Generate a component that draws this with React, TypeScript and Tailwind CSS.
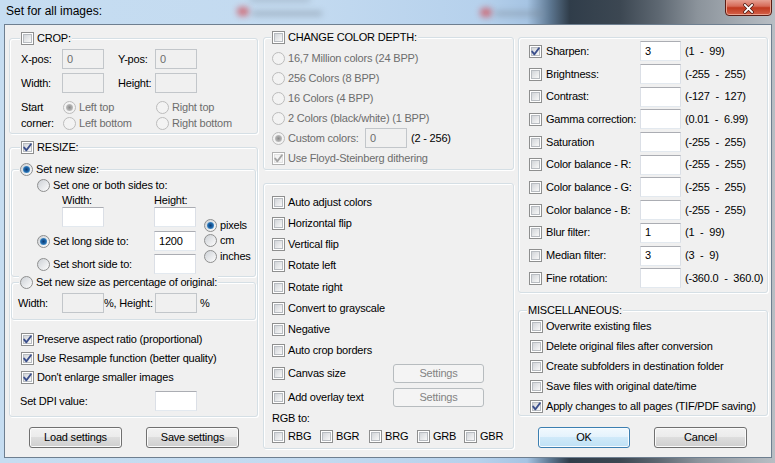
import React from 'react';

type Opt = { checked?: boolean; disabled?: boolean };

const Check = ({ checked = false, disabled = false }: Opt) => (
  <span className={`relative flex h-[13px] w-[13px] shrink-0 items-center justify-center border bg-white ${disabled ? 'border-[#b1b1b1]' : 'border-[#8e8f8f]'}`}>
    <span className={`h-[9px] w-[9px] border ${disabled ? 'border-[#e3e3e3] bg-[#f4f4f4]' : 'border-[#b8bcc1] bg-[linear-gradient(135deg,#d2d5d9,#f8f8f8)]'}`} />
    {checked && (
      <svg viewBox="0 0 11 11" className="absolute left-0 top-0 h-[11px] w-[11px]">
        <path d="M2.2 5.6 L4.4 8.3 L8.9 2.2" fill="none" stroke={disabled ? '#a3a3a3' : '#3b4f8c'} strokeWidth="1.9" strokeLinecap="round" strokeLinejoin="round" />
      </svg>
    )}
  </span>
);

const Radio = ({ checked = false, disabled = false }: Opt) => (
  <span className={`flex h-[13px] w-[13px] shrink-0 items-center justify-center rounded-full border ${disabled ? 'border-[#bcbcbc] bg-[#f3f3f3]' : 'border-[#8e8f8f] bg-[linear-gradient(135deg,#cdd1d6,#fdfdfd)]'}`}>
    {checked && (
      <span className={`h-[7px] w-[7px] rounded-full ${disabled ? 'bg-[radial-gradient(circle,#8a8a8a_0%,#b2b2b2_55%,#dcdcdc_100%)]' : 'bg-[radial-gradient(circle,#0d3a70_0%,#1d64a8_45%,#74bfea_100%)]'}`} />
    )}
  </span>
);

const Field = ({ value = '', disabled = false, w = 'w-[42px]' }: { value?: string; disabled?: boolean; w?: string }) => (
  <span className={`flex h-[20px] ${w} shrink-0 items-center border pl-[4px] ${disabled ? 'border-[#c2c6ca] bg-[#f0f0f0] text-[#6d6d6d]' : 'border-t-[#abadb3] border-x-[#dbdfe6] border-b-[#e3e9ef] bg-white'}`}>
    {value}
  </span>
);

const Btn = ({ children, w = 'w-[93px]', h = 'h-[21px]', kind = 'normal' }: { children: React.ReactNode; w?: string; h?: string; kind?: string }) => {
  const look =
    kind === 'default'
      ? 'border-[#3c7fb1] bg-[linear-gradient(180deg,#f1f9fe_0%,#e3f2fc_49%,#cfe9f9_50%,#bfe1f5_100%)] shadow-[inset_0_0_0_1px_#f8fcff]'
      : kind === 'disabled'
        ? 'border-[#b7bcbf] bg-[#f4f4f4] text-[#838383]'
        : 'border-[#707070] bg-[linear-gradient(180deg,#f2f2f2_0%,#ebebeb_49%,#dddddd_50%,#cfcfcf_100%)] shadow-[inset_0_0_0_1px_#fbfbfb]';
  return <span className={`flex ${w} ${h} shrink-0 items-center justify-center rounded-[3px] border ${look}`}>{children}</span>;
};

const Group = ({ className = '', legend, legendLeft = 'left-[8px]', children }: { className?: string; legend?: React.ReactNode; legendLeft?: string; children?: React.ReactNode }) => (
  <div className={`relative rounded-[3px] border border-[#d5dfe5] shadow-[inset_1px_1px_0_#ffffff,1px_1px_0_#ffffff] ${className}`}>
    {legend && <div className={`absolute -top-[7px] flex h-[13px] items-center gap-[3px] bg-[#f0f0f0] px-[1px] ${legendLeft}`}>{legend}</div>}
    {children}
  </div>
);

const grey = 'text-[#6d6d6d]';

const filters: [string, boolean, string, string][] = [
  ['Sharpen:', true, '3', '(1  -  99)'],
  ['Brightness:', false, '', '(-255  -  255)'],
  ['Contrast:', false, '', '(-127  -  127)'],
  ['Gamma correction:', false, '', '(0.01  -  6.99)'],
  ['Saturation', false, '', '(-255  -  255)'],
  ['Color balance - R:', false, '', '(-255  -  255)'],
  ['Color balance - G:', false, '', '(-255  -  255)'],
  ['Color balance - B:', false, '', '(-255  -  255)'],
  ['Blur filter:', false, '1', '(1  -  99)'],
  ['Median filter:', false, '3', '(3  -  9)'],
  ['Fine rotation:', false, '', '(-360.0  -  360.0)'],
];

const misc: [string, boolean][] = [
  ['Overwrite existing files', false],
  ['Delete original files after conversion', false],
  ['Create subfolders in destination folder', false],
  ['Save files with original date/time', false],
  ['Apply changes to all pages (TIF/PDF saving)', true],
];

const actions: [string, string][] = [
  ['Auto adjust colors', 'h-[21px]'],
  ['Horizontal flip', 'h-[21px]'],
  ['Vertical flip', 'h-[20px]'],
  ['Rotate left', 'h-[22px]'],
  ['Rotate right', 'h-[22px]'],
  ['Convert to grayscale', 'h-[21px]'],
  ['Negative', 'h-[21px]'],
  ['Auto crop borders', 'h-[21px]'],
];

export default function App() {
  return (
    <div className="relative h-[463px] w-[775px] overflow-hidden bg-[linear-gradient(90deg,#c6ddf1_0%,#c3daf0_40%,#b6d1ec_62%,#a6c4e3_68%,#5d7791_71%,#303d4a_73.5%,#3c4752_80%,#5e6872_85%,#8b939b_90%,#a5acb3_95.5%,#b8bec4_100%)] font-['Liberation_Sans',Arial,sans-serif] text-[11px] leading-none tracking-[-0.2px] text-black">
      {/* blurred desktop behind the glass */}
      <span className="absolute left-[237px] top-[7px] h-[9px] w-[12px] rounded-full bg-[#d2545d] opacity-80 blur-[3px]" />
      <span className="absolute left-[252px] top-[11px] h-[5px] w-[70px] bg-[#7d8b99] opacity-50 blur-[3px]" />
      <span className="absolute left-[250px] top-[-3px] h-[5px] w-[60px] bg-[#7d8b99] opacity-40 blur-[3px]" />
      <span className="absolute left-[480px] top-[8px] h-[9px] w-[12px] rounded-full bg-[#d2545d] opacity-80 blur-[3px]" />
      <span className="absolute left-[495px] top-[11px] h-[5px] w-[48px] bg-[#7d8b99] opacity-50 blur-[3px]" />

      {/* title bar */}
      <div className="relative flex h-[24px] items-start justify-between">
        <span className="pl-[6px] pt-[4px] text-[12px] leading-[14px] tracking-normal">Set for all images:</span>
        <span className="mr-[3px] -mt-[2px] flex h-[18px] w-[47px] items-center justify-center rounded-b-[4px] border border-[#5a1d15] bg-[linear-gradient(180deg,#e9a99c_0%,#d66b58_45%,#c0391f_55%,#d4624a_100%)] shadow-[inset_0_0_0_1px_#eba28f]">
          <svg viewBox="0 0 14 12" className="mt-[2px] h-[11px] w-[13px]">
            <path d="M3 2 L11 10 M11 2 L3 10" stroke="#4a1a12" strokeWidth="3.6" strokeLinecap="round" />
            <path d="M3 2 L11 10 M11 2 L3 10" stroke="#ffffff" strokeWidth="2" strokeLinecap="round" />
          </svg>
        </span>
      </div>

      {/* client area */}
      <div className="ml-[4px] flex h-[434px] w-[768px] border border-[#6e7f90] bg-[#f0f0f0] pl-[4px]">
        {/* left column */}
        <div className="flex w-[249px] shrink-0 flex-col pt-[13px]">
          <Group
            className="h-[96px]"
            legendLeft="left-[10px]"
            legend={
              <>
                <Check />
                <span>CROP:</span>
              </>
            }
          >
            <div className="flex flex-col pl-[11px] pt-[10px]">
              <div className="flex h-[20px] items-center">
                <span className="w-[41px]">X-pos:</span>
                <Field value="0" disabled />
                <span className="ml-[14px] w-[37px]">Y-pos:</span>
                <Field value="0" disabled />
              </div>
              <div className="mt-[4px] flex h-[20px] items-center">
                <span className="w-[41px]">Width:</span>
                <Field disabled />
                <span className="ml-[14px] w-[37px]">Height:</span>
                <Field disabled />
              </div>
              <div className="mt-[6px] flex">
                <div className="flex w-[42px] flex-col">
                  <span className="flex h-[16px] items-center">Start</span>
                  <span className="flex h-[16px] items-center">corner:</span>
                </div>
                <div className={`flex w-[93px] flex-col ${grey}`}>
                  <span className="flex h-[16px] items-center gap-[3px]"><Radio checked disabled />Left top</span>
                  <span className="flex h-[16px] items-center gap-[3px]"><Radio disabled />Left bottom</span>
                </div>
                <div className={`flex flex-col ${grey}`}>
                  <span className="flex h-[16px] items-center gap-[3px]"><Radio disabled />Right top</span>
                  <span className="flex h-[16px] items-center gap-[3px]"><Radio disabled />Right bottom</span>
                </div>
              </div>
            </div>
          </Group>

          <Group
            className="mt-[13px] h-[270px]"
            legendLeft="left-[10px]"
            legend={
              <>
                <Check checked />
                <span>RESIZE:</span>
              </>
            }
          >
            <div className="flex flex-col">
              <Group
                className="mx-[1px] mt-[21px] h-[108px]"
                legendLeft="left-[7px]"
                legend={
                  <>
                    <Radio checked />
                    <span>Set new size:</span>
                  </>
                }
              >
                <div className="flex flex-col pl-[25px]">
                  <div className="mt-[7px] flex h-[16px] items-center gap-[3px]">
                    <Radio />
                    <span>Set one or both sides to:</span>
                  </div>
                  <div className="flex h-[14px] items-center pl-[25px]">
                    <span className="w-[92px]">Width:</span>
                    <span>Height:</span>
                  </div>
                  <div className="flex">
                    <div className="flex w-[117px] flex-col">
                      <div className="h-[20px] pl-[25px]">
                        <Field w="w-[42px]" />
                      </div>
                      <div className="mt-[4px] flex h-[20px] items-center gap-[3px]">
                        <Radio checked />
                        <span>Set long side to:</span>
                      </div>
                      <div className="mt-[3px] flex h-[20px] items-center gap-[3px]">
                        <Radio />
                        <span>Set short side to:</span>
                      </div>
                    </div>
                    <div className="flex w-[42px] flex-col">
                      <Field />
                      <div className="mt-[4px]"><Field value="1200" /></div>
                      <div className="mt-[3px]"><Field /></div>
                    </div>
                    <div className="ml-[8px] mt-[10px] flex flex-col">
                      <span className="flex h-[16px] items-center gap-[3px]"><Radio checked />pixels</span>
                      <span className="flex h-[15px] items-center gap-[3px]"><Radio />cm</span>
                      <span className="flex h-[16px] items-center gap-[3px]"><Radio />inches</span>
                    </div>
                  </div>
                </div>
              </Group>

              <Group
                className="mx-[1px] mt-[5px] h-[38px]"
                legendLeft="left-[7px]"
                legend={
                  <>
                    <Radio />
                    <span>Set new size as percentage of original:</span>
                  </>
                }
              >
                <div className="mt-[10px] flex h-[20px] items-center pl-[6px]">
                  <span className="w-[44px]">Width:</span>
                  <Field disabled />
                  <span className="w-[51px]">%, Height:</span>
                  <Field disabled />
                  <span className="ml-[3px]">%</span>
                </div>
              </Group>

              <div className="mt-[10px] flex flex-col pl-[11px]">
                <span className="flex h-[19px] items-center gap-[3px]"><Check checked />Preserve aspect ratio (proportional)</span>
                <span className="flex h-[19px] items-center gap-[3px]"><Check checked />Use Resample function (better quality)</span>
                <span className="flex h-[19px] items-center gap-[3px]"><Check checked />Don't enlarge smaller images</span>
              </div>
              <div className="mt-[4px] flex h-[20px] items-center pl-[10px]">
                <span className="w-[135px]">Set DPI value:</span>
                <Field />
              </div>
            </div>
          </Group>

          <div className="mt-[10px] flex gap-[24px] pl-[20px]">
            <Btn>Load settings</Btn>
            <Btn>Save settings</Btn>
          </div>
        </div>

        {/* middle column */}
        <div className="ml-[5px] flex w-[251px] shrink-0 flex-col pt-[12px]">
          <Group
            className="h-[133px]"
            legendLeft="left-[7px]"
            legend={
              <>
                <Check />
                <span>CHANGE COLOR DEPTH:</span>
              </>
            }
          >
            <div className={`flex flex-col pl-[8px] pt-[10px] ${grey}`}>
              <span className="flex h-[20px] items-center gap-[3px]"><Radio disabled />16,7 Million colors (24 BPP)</span>
              <span className="flex h-[20px] items-center gap-[3px]"><Radio disabled />256 Colors (8 BPP)</span>
              <span className="flex h-[20px] items-center gap-[3px]"><Radio disabled />16 Colors (4 BPP)</span>
              <span className="flex h-[20px] items-center gap-[3px]"><Radio disabled />2 Colors (black/white) (1 BPP)</span>
              <span className="flex h-[20px] items-center gap-[3px]">
                <Radio checked disabled />
                <span className="w-[74px]">Custom colors:</span>
                <Field value="0" disabled />
                <span className="ml-[1px] text-black">(2 - 256)</span>
              </span>
              <span className="flex h-[20px] items-center gap-[3px]"><Check checked disabled />Use Floyd-Steinberg dithering</span>
            </div>
          </Group>

          <Group className="mt-[13px] h-[266px]">
            <div className="flex flex-col pl-[8px] pt-[8px]">
              {actions.map(([label, h]) => (
                <span key={label} className={`flex ${h} items-center gap-[3px]`}>
                  <Check />
                  {label}
                </span>
              ))}
              <span className="flex h-[24px] items-center gap-[3px]">
                <Check />
                <span className="w-[102px]">Canvas size</span>
                <Btn w="w-[91px]" h="h-[19px]" kind="disabled">Settings</Btn>
              </span>
              <span className="flex h-[24px] items-center gap-[3px]">
                <Check />
                <span className="w-[102px]">Add overlay text</span>
                <Btn w="w-[91px]" h="h-[19px]" kind="disabled">Settings</Btn>
              </span>
              <span className="flex h-[18px] items-center">RGB to:</span>
              <div className="flex h-[18px] items-center">
                <span className="flex w-[48px] items-center gap-[3px]"><Check />RBG</span>
                <span className="flex w-[49px] items-center gap-[3px]"><Check />BGR</span>
                <span className="flex w-[48px] items-center gap-[3px]"><Check />BRG</span>
                <span className="flex w-[47px] items-center gap-[3px]"><Check />GRB</span>
                <span className="flex items-center gap-[3px]"><Check />GBR</span>
              </div>
            </div>
          </Group>
        </div>

        {/* right column */}
        <div className="ml-[4px] flex w-[250px] shrink-0 flex-col pt-[12px]">
          <Group className="h-[256px]">
            <div className="flex flex-col pl-[10px] pt-[2px]">
              {filters.map(([label, on, val, range]) => (
                <div key={label} className="flex h-[22.7px] items-center">
                  <Check checked={on} />
                  <span className="ml-[4px] w-[94px]">{label}</span>
                  <Field value={val} w="w-[41px]" />
                  <span className="ml-[4px] whitespace-pre">{range}</span>
                </div>
              ))}
            </div>
          </Group>

          <Group className="mt-[17px] h-[106px]" legendLeft="left-[8px]" legend={<span>MISCELLANEOUS:</span>}>
            <div className="flex flex-col pl-[11px] pt-[5px]">
              {misc.map(([label, on]) => (
                <span key={label} className="flex h-[20px] items-center gap-[3px]">
                  <Check checked={on} />
                  {label}
                </span>
              ))}
            </div>
          </Group>

          <div className="mt-[11px] flex gap-[24px] pl-[20px]">
            <Btn w="w-[92px]" kind="default">OK</Btn>
            <Btn>Cancel</Btn>
          </div>
        </div>
      </div>
    </div>
  );
}
